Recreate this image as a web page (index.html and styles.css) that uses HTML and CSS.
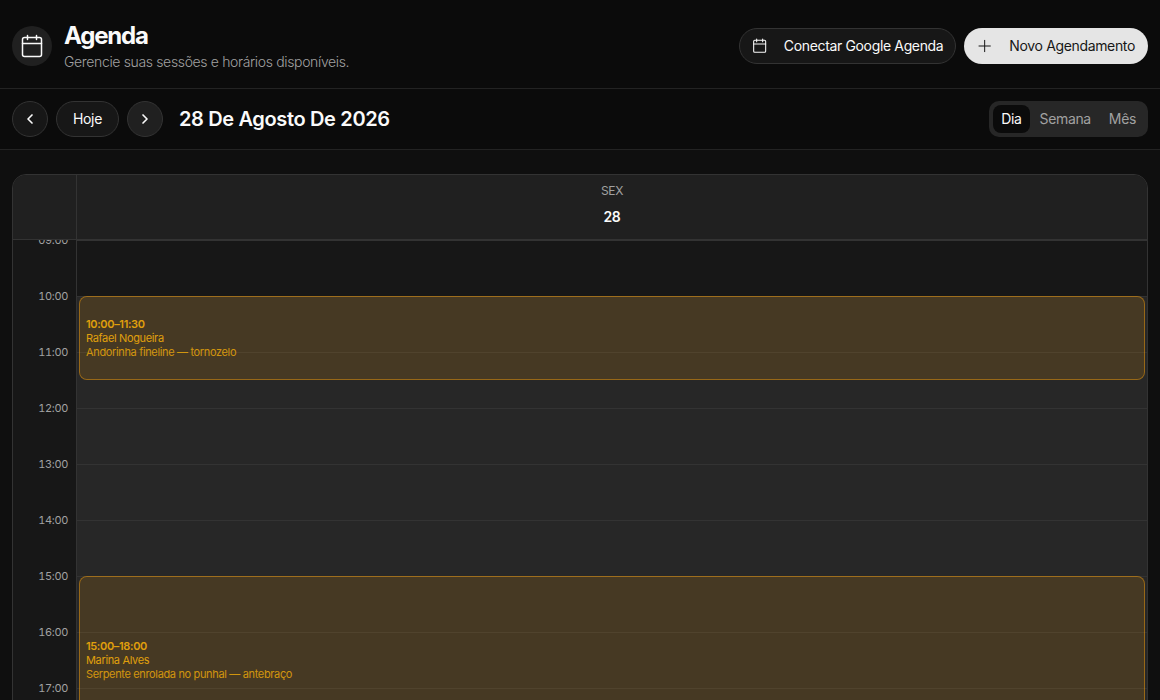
FILE: index.html
```html
<!DOCTYPE html>
<html lang="pt-BR">
<head>
    <meta charset="UTF-8">
    <meta name="viewport" content="width=device-width, initial-scale=1.0">
    <title>Agenda</title>
    <link rel="stylesheet" href="styles.css">
</head>
<body>
    <header class="page-header">
        <div class="header-icon">
            <svg width="24" height="24" viewBox="0 0 24 24" fill="none" stroke="currentColor" stroke-width="1.5" stroke-linecap="round" stroke-linejoin="round">
                <rect x="2.5" y="3.5" width="19" height="19" rx="2"/>
                <path d="M7.5 1.5v4M16.5 1.5v4M2.5 9.5h19"/>
            </svg>
        </div>
        <div class="header-text">
            <h1>Agenda</h1>
            <p>Gerencie suas sessões e horários disponíveis.</p>
        </div>
        <div class="header-actions">
            <button type="button" class="btn btn-outline">
                <svg width="16" height="16" viewBox="0 0 24 24" fill="none" stroke="currentColor" stroke-width="1.6" stroke-linecap="round" stroke-linejoin="round">
                    <rect x="2.5" y="3.5" width="18" height="18" rx="1.5"/>
                    <path d="M7 1.5v4M16 1.5v4M2.5 9h18"/>
                </svg>
                Conectar Google Agenda
            </button>
            <button type="button" class="btn btn-primary">
                <svg width="16" height="16" viewBox="0 0 24 24" fill="none" stroke="currentColor" stroke-width="1.5" stroke-linecap="round">
                    <path d="M3 12h17M11.5 3.5v17"/>
                </svg>
                Novo Agendamento
            </button>
        </div>
    </header>

    <div class="toolbar">
        <button type="button" class="btn btn-outline btn-round" aria-label="Anterior">
            <svg width="16" height="16" viewBox="0 0 24 24" fill="none" stroke="currentColor" stroke-width="2.5" stroke-linecap="round" stroke-linejoin="round">
                <path d="M15 18l-6-6 6-6"/>
            </svg>
        </button>
        <button type="button" class="btn btn-outline btn-today">Hoje</button>
        <button type="button" class="btn btn-outline btn-round is-active" aria-label="Próximo">
            <svg width="16" height="16" viewBox="0 0 24 24" fill="none" stroke="currentColor" stroke-width="2.5" stroke-linecap="round" stroke-linejoin="round">
                <path d="M9 18l6-6-6-6"/>
            </svg>
        </button>
        <h2>28 De Agosto De 2026</h2>
        <div class="view-tabs" role="tablist">
            <button type="button" role="tab" class="tab selected" aria-selected="true">Dia</button>
            <button type="button" role="tab" class="tab" aria-selected="false">Semana</button>
            <button type="button" role="tab" class="tab" aria-selected="false">Mês</button>
        </div>
    </div>

    <main>
        <section class="calendar">
            <div class="calendar-head">
                <div class="head-gutter"></div>
                <div class="head-day">
                    <span class="weekday">SEX</span>
                    <span class="day-number">28</span>
                </div>
            </div>
            <div class="calendar-body">
                <div class="hours">
                    <div>09:00</div>
                    <div>10:00</div>
                    <div>11:00</div>
                    <div>12:00</div>
                    <div>13:00</div>
                    <div>14:00</div>
                    <div>15:00</div>
                    <div>16:00</div>
                    <div>17:00</div>
                </div>
                <!-- two grid rows per hour, first row is 09:00 -->
                <div class="day-column">
                    <div class="open-hours"></div>
                    <article class="event event-morning">
                        <strong>10:00–11:30</strong>
                        <span>Rafael Nogueira</span>
                        <span class="event-note">Andorinha fineline — tornozelo</span>
                    </article>
                    <article class="event event-afternoon">
                        <strong>15:00–18:00</strong>
                        <span>Marina Alves</span>
                        <span class="event-note">Serpente enrolada no punhal — antebraço</span>
                    </article>
                </div>
            </div>
        </section>
    </main>
</body>
</html>
```
FILE: styles.css
```css
:root {
    --background: #0b0b0b;
    --page: #0f0f0f;
    --card: #171717;
    --raised: #202020;
    --open: #272727;
    --border: #333333;
    --divider: #232323;
    --text: #fafafa;
    --muted: #a1a1a1;
    --amber: #e0a00c;
    --hour: 56px;
}

* {
    margin: 0;
    padding: 0;
    box-sizing: border-box;
}

body {
    height: 100vh;
    overflow: hidden;
    display: flex;
    flex-direction: column;
    background-color: var(--page);
    color: var(--text);
    font-family: Inter, "Liberation Sans", sans-serif;
    font-size: 14px;
    line-height: 20px;
    letter-spacing: -0.025em;
}

button {
    font: inherit;
    letter-spacing: inherit;
    color: inherit;
    cursor: pointer;
}

svg {
    flex-shrink: 0;
}

.page-header {
    display: flex;
    align-items: center;
    gap: 12px;
    padding: 20px 12px 16px;
    background-color: var(--background);
    border-bottom: 1px solid var(--divider);
}

.header-icon {
    display: flex;
    align-items: center;
    justify-content: center;
    width: 40px;
    height: 40px;
    border-radius: 50%;
    background-color: var(--raised);
}

.header-text h1 {
    font-size: 24px;
    line-height: 32px;
    font-weight: 700;
    letter-spacing: -0.05em;
}

.header-text p {
    color: var(--muted);
    font-weight: 300;
}

.header-actions {
    display: flex;
    gap: 8px;
    margin-left: auto;
}

.btn {
    display: flex;
    align-items: center;
    justify-content: center;
    gap: 16px;
    height: 36px;
    padding: 0 12px;
    border: 1px solid transparent;
    border-radius: 18px;
}

.btn-outline {
    background-color: var(--card);
    border-color: var(--border);
}

.btn-primary {
    background-color: #e5e5e5;
    color: #171717;
}

.toolbar {
    display: flex;
    align-items: center;
    gap: 8px;
    padding: 12px;
    background-color: var(--background);
    border-bottom: 1px solid var(--divider);
}

.toolbar h2 {
    margin-left: 8px;
    font-size: 20px;
    line-height: 28px;
    font-weight: 600;
}

.btn-round {
    width: 36px;
    padding: 0;
}

.btn-round.is-active {
    background-color: var(--raised);
}

.btn-today {
    padding: 0 16px;
}

.view-tabs {
    display: flex;
    gap: 2px;
    margin-left: auto;
    padding: 4px;
    border-radius: 10px;
    background-color: var(--open);
}

.tab {
    height: 28px;
    padding: 0 8px;
    border: none;
    border-radius: 8px;
    background: none;
    color: var(--muted);
}

.tab.selected {
    background-color: var(--background);
    color: var(--text);
}

main {
    flex: 1;
    min-height: 0;
    padding: 24px 12px 0;
}

.calendar {
    border: 1px solid var(--border);
    border-radius: 14px;
    background-color: var(--card);
    overflow: hidden;
}

.calendar-head,
.calendar-body {
    display: grid;
    grid-template-columns: 64px 1fr;
}

.calendar-head {
    height: 65px;
    background-color: var(--raised);
    border-bottom: 1px solid var(--border);
}

.head-gutter,
.hours {
    border-right: 1px solid var(--border);
}

.head-day {
    display: flex;
    flex-direction: column;
    align-items: center;
    gap: 8px;
    padding-top: 8px;
}

.weekday {
    color: var(--muted);
    font-size: 12px;
    line-height: 16px;
}

.day-number {
    font-weight: 600;
}

.calendar-body {
    overflow: hidden;
}

/* labels sit centred on their hour line */
.hours {
    margin-top: -8px;
    padding-right: 8px;
    text-align: right;
    color: var(--muted);
    font-size: 11px;
    line-height: 16px;
    font-variant-numeric: tabular-nums;
}

.hours div {
    height: var(--hour);
}

.day-column {
    display: grid;
    grid-template-columns: 1fr;
    grid-template-rows: repeat(20, 28px);
    background-image: linear-gradient(var(--border) 1px, transparent 1px);
    background-size: 100% var(--hour);
}

.open-hours {
    grid-area: 3 / 1 / 21 / 2;
    background-color: var(--open);
    background-image: linear-gradient(var(--border) 1px, transparent 1px);
    background-size: 100% var(--hour);
}

.event {
    display: flex;
    flex-direction: column;
    justify-content: center;
    margin: 0 2px;
    padding: 0 6px;
    border: 1px solid rgba(245, 158, 11, 0.55);
    border-radius: 8px;
    background-color: rgba(245, 158, 11, 0.15);
    background-clip: padding-box;
    color: var(--amber);
    font-size: 11px;
    line-height: 14px;
}

.event strong {
    font-weight: 600;
}

.event-note {
    opacity: 0.9;
}

.event-morning {
    grid-area: 3 / 1 / 6 / 2;
}

.event-afternoon {
    grid-area: 13 / 1 / 19 / 2;
}
```
